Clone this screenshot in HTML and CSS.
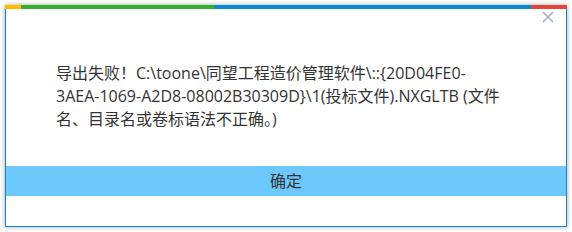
FILE: index.html
```html
<!DOCTYPE html>
<html lang="zh-CN">
<head>
<meta charset="utf-8">
<link rel="stylesheet" href="styles.css">
</head>
<body>
<div class="dialog">
  <div class="stripe">
    <span class="s-yellow"></span><span class="s-green"></span><span class="s-blue"></span><span class="s-red"></span>
  </div>
  <button class="close" aria-label="关闭">
    <svg width="12" height="12" viewBox="0 0 12 12"><path d="M1 1L11 11M11 1L1 11" stroke="#a3afc6" stroke-width="1.6" fill="none"/></svg>
  </button>
  <div class="body">
    <p class="msg">导出失败！C:\toone\同望工程造价管理软件\::{20D04FE0-<br>3AEA-1069-A2D8-08002B30309D}\1(投标文件).NXGLTB (文件<br>名、目录名或卷标语法不正确。)</p>
  </div>
  <div class="ok">确定</div>
  <div class="foot"></div>
</div>
</body>
</html>
```
FILE: styles.css
```css
html, body {
  margin: 0;
  padding: 0;
  background: #ffffff;
}
body {
  padding: 5px;
  font-family: "Open Sans", "Noto Sans CJK SC", sans-serif;
}
.dialog {
  position: relative;
  width: 562px;
  height: 222px;
  box-sizing: border-box;
  border: 1px solid #0a88d8;
  border-top: none;
  display: flex;
  flex-direction: column;
  box-shadow: 0 0 5px rgba(0,0,0,0.35);
  background: #fff;
}
.stripe {
  display: flex;
  height: 4px;
  margin: 0 -1px;
}
.stripe span { display: block; height: 100%; }
.s-yellow { width: 16px; background: #ffbd00; }
.s-green { width: 193px; background: #33b02c; }
.s-blue { flex: 1; background: #0a88d8; }
.s-red { width: 36px; background: #e2433a; }
.close {
  position: absolute;
  top: 6px;
  right: 12px;
  width: 12px;
  height: 12px;
  padding: 0;
  border: 0;
  background: transparent;
  display: flex;
}
.body {
  flex: 1;
  padding: 53px 0 0 50px;
}
.msg {
  margin: 0;
  font-size: 16px;
  line-height: 23px;
  color: #333333;
  white-space: nowrap;
}
.ok {
  height: 30px;
  line-height: 30px;
  background: #6cc8fd;
  color: #333333;
  text-align: center;
  font-size: 16px;
}
.foot { height: 30px; }
```
